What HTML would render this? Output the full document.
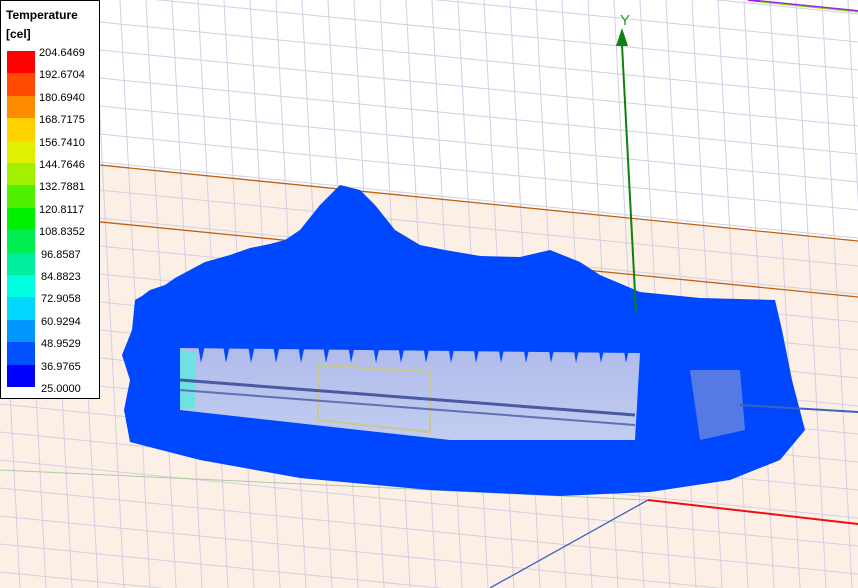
<!DOCTYPE html>
<html><head><meta charset="utf-8"><style>
html,body{margin:0;padding:0;width:858px;height:588px;overflow:hidden;background:#fff}
svg{position:absolute;left:0;top:0}
#leg{position:absolute;left:0;top:0;width:98px;height:397px;border:1px solid #000;background:#fff;font-family:"Liberation Sans",sans-serif}
#leg .t{position:absolute;left:5px;font-weight:bold;font-size:12px}
#leg .sw{position:absolute;left:6px;width:28px;height:22.4px}
#leg .l{position:absolute;left:38px;font-size:11px;line-height:12px}
</style></head><body>
<svg width="858" height="588" viewBox="0 0 858 588">
<defs>
<linearGradient id="box" x1="0" y1="0" x2="0" y2="1">
<stop offset="0" stop-color="#c4c8e8"/><stop offset="1" stop-color="#d8dcf0"/>
</linearGradient>
</defs>
<polygon points="0,155 858,241 858,588 0,588" fill="#fcf0e6"/>
<g stroke="#d4cee2" stroke-width="1">
<path d="M-10 0l30 588M16 0l30 588M42 0l30 588M68 0l30 588M94 0l30 588M120 0l30 588M146 0l30 588M172 0l30 588M198 0l30 588M224 0l30 588M250 0l30 588M276 0l30 588M302 0l30 588M328 0l30 588M354 0l30 588M380 0l30 588M406 0l30 588M432 0l30 588M458 0l30 588M484 0l30 588M510 0l30 588M536 0l30 588M562 0l30 588M588 0l30 588M614 0l30 588M640 0l30 588M666 0l30 588M692 0l30 588M718 0l30 588M744 0l30 588M770 0l30 588M796 0l30 588M822 0l30 588M848 0l30 588"/>
<path d="M0 -100l858 86M0 -72l858 86M0 -44l858 86M0 -16l858 86M0 12l858 86M0 40l858 86M0 68l858 86M0 96l858 86M0 124l858 86M0 152l858 86M0 180l858 86M0 208l858 86M0 236l858 86M0 264l858 86M0 292l858 86M0 320l858 86M0 348l858 86M0 376l858 86M0 404l858 86M0 432l858 86M0 460l858 86M0 488l858 86M0 516l858 86M0 544l858 86M0 572l858 86"/>
</g>
<line x1="0" y1="155" x2="858" y2="241" stroke="#c06010" stroke-width="1.3"/>
<line x1="0" y1="212" x2="858" y2="297" stroke="#c06010" stroke-width="1.3"/>
<line x1="748" y1="0" x2="858" y2="11" stroke="#a020f0" stroke-width="2"/>
<line x1="760" y1="2" x2="858" y2="12" stroke="#80e000" stroke-width="1"/>
<line x1="0" y1="470" x2="648" y2="500" stroke="#b0c8a0" stroke-width="1"/>
<path d="M135,300 L142,296 L150,290 L165,285 L175,278 L190,270 L205,262 L230,255 L250,248 L270,244 L285,240 L300,230 L320,205 L340,185 L360,190 L375,205 L395,230 L420,245 L445,250 L480,256 L520,257 L550,250 L580,262 L600,275 L640,292 L700,298 L775,300 L782,330 L792,380 L805,430 L780,460 L730,480 L650,492 L560,496 L430,490 L300,478 L200,460 L130,442 L124,410 L130,380 L122,355 L132,330 Z" fill="#0048ff"/>
<polygon points="180,348 640,353 635,440 450,440 180,410" fill="url(#box)" opacity="0.9"/>
<polygon points="180,350 195,352 195,410 180,408" fill="#70e0e0"/>
<polygon points="318,365 430,372 430,432 318,420" fill="none" stroke="#c8c890" stroke-width="2"/>
<line x1="180" y1="380" x2="635" y2="415" stroke="#4a5aa0" stroke-width="3"/>
<line x1="180" y1="390" x2="635" y2="425" stroke="#6070b0" stroke-width="2"/>
<path d="M180,345 l18,0 l3,18 l4,-18 l18,0 l3,18 l4,-18 l18,0 l3,18 l4,-18 l18,0 l3,18 l4,-18 l18,0 l3,18 l4,-18 l18,0 l3,18 l4,-18 l18,0 l3,18 l4,-18 l18,0 l3,18 l4,-18 l18,0 l3,18 l4,-18 l18,0 l3,18 l4,-18 l18,0 l3,18 l4,-18 l18,0 l3,18 l4,-18 l18,0 l3,18 l4,-18 l18,0 l3,18 l4,-18 l18,0 l3,18 l4,-18 l18,0 l3,18 l4,-18 l18,0 l3,18 l4,-18 l18,0 l3,18 l4,-18 L640,352 L640,330 L180,325 Z" fill="#0048ff"/>
<polygon points="690,370 740,370 745,430 700,440" fill="#7a90d8" opacity="0.7"/>
<line x1="740" y1="405" x2="858" y2="412" stroke="#4060c0" stroke-width="2"/>
<line x1="622" y1="45" x2="636" y2="312" stroke="#108010" stroke-width="2"/>
<polygon points="622,28 616,46 628,46" fill="#108010"/>
<text x="620" y="25" font-family="Liberation Sans,sans-serif" font-size="15" fill="#2a9a2a">Y</text>
<line x1="648" y1="500" x2="858" y2="524" stroke="#ee1010" stroke-width="2"/>
<line x1="648" y1="500" x2="490" y2="588" stroke="#4060c0" stroke-width="1.3"/>
</svg>
<div id="leg">
<div class="t" style="top:7px">Temperature</div>
<div class="t" style="top:26px">[cel]</div>
<div class="sw" style="top:50px;background:#ff0000"></div>
<div class="sw" style="top:72.4px;background:#ff4a00"></div>
<div class="sw" style="top:94.8px;background:#ff8c00"></div>
<div class="sw" style="top:117.2px;background:#ffd200"></div>
<div class="sw" style="top:139.6px;background:#e0f000"></div>
<div class="sw" style="top:162px;background:#a0f000"></div>
<div class="sw" style="top:184.4px;background:#50f000"></div>
<div class="sw" style="top:206.8px;background:#00f000"></div>
<div class="sw" style="top:229.2px;background:#00ee50"></div>
<div class="sw" style="top:251.6px;background:#00eea0"></div>
<div class="sw" style="top:274px;background:#00ffe0"></div>
<div class="sw" style="top:296.4px;background:#00d8ff"></div>
<div class="sw" style="top:318.8px;background:#0098ff"></div>
<div class="sw" style="top:341.2px;background:#0050ff"></div>
<div class="sw" style="top:363.6px;background:#0000ff"></div>
<div class="l" style="top:46px">204.6469</div>
<div class="l" style="top:68px">192.6704</div>
<div class="l" style="top:91px">180.6940</div>
<div class="l" style="top:113px">168.7175</div>
<div class="l" style="top:136px">156.7410</div>
<div class="l" style="top:158px">144.7646</div>
<div class="l" style="top:180px">132.7881</div>
<div class="l" style="top:203px">120.8117</div>
<div class="l" style="top:225px">108.8352</div>
<div class="l" style="top:248px;left:40px">96.8587</div>
<div class="l" style="top:270px;left:40px">84.8823</div>
<div class="l" style="top:292px;left:40px">72.9058</div>
<div class="l" style="top:315px;left:40px">60.9294</div>
<div class="l" style="top:337px;left:40px">48.9529</div>
<div class="l" style="top:360px;left:40px">36.9765</div>
<div class="l" style="top:382px;left:40px">25.0000</div>
</div>
</body></html>
